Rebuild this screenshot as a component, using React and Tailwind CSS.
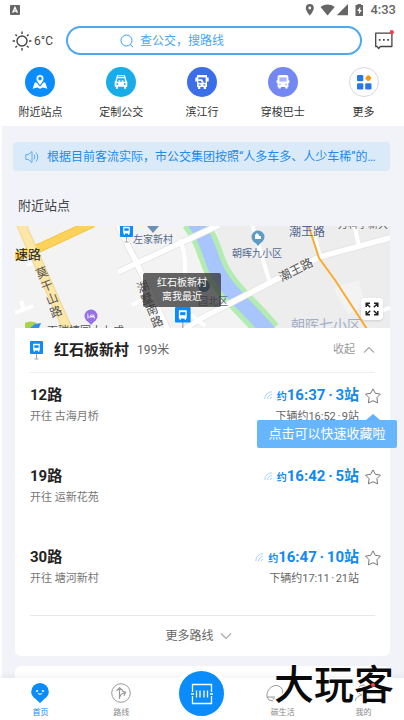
import React from "react";

const FONT = "font-['Roboto','Noto_Sans_CJK_SC',sans-serif]";

function BusGlyph({ body = "#fff", glass = "#18ace9", className = "size-4" }) {
  return (
    <svg viewBox="0 0 16 16" className={className} aria-hidden="true">
      <path d="M4.6 1h6.8a2 2 0 0 1 2 2v3.3h1v2.6h-1v4H2.6v-4h-1V6.3h1V3a2 2 0 0 1 2-2Z" fill={body} />
      <path d="M4.3 3.4h7.4v4.2H4.3z" fill={glass} />
      <circle cx="4.9" cy="10.3" r=".9" fill={glass} />
      <circle cx="11.1" cy="10.3" r=".9" fill={glass} />
      <path d="M3.4 12.5h2.4v2H3.4zM10.2 12.5h2.4v2h-2.4z" fill={body} />
    </svg>
  );
}

function StatusBar() {
  return (
    <div className="flex h-5 items-center justify-between pl-2.5 pr-2 text-[#666]">
      <svg viewBox="0 0 10 10" className="size-2.5">
        <rect width="10" height="10" rx="1" fill="#666" />
        <path d="M2.6 7.8 5 2.4l2.4 5.4M3.6 6.1h2.8" fill="none" stroke="#fff" strokeWidth="1.3" />
      </svg>
      <div className="flex items-center">
        <svg viewBox="0 0 60 14" className="mr-1.5 h-3.5 w-[60px]" fill="#666">
          <path fillRule="evenodd" d="M5.800 1a4 4 0 0 0-4 4c0 2.900 4 7.600 4 7.600s4-4.700 4-7.600a4 4 0 0 0-4-4Zm0 2.600a1.400 1.400 0 1 1 0 2.800 1.400 1.400 0 0 1 0-2.800Z" />
          <path d="M16.500 3.900c4.200-3.300 10-3.300 14.200 0l-7.100 8.600Z" />
          <path d="M44 1v11.300H32.800Z" />
          <path fillRule="evenodd" d="M51.500 2h2V.9H57V2h2v11h-7.500ZM56.200 3.800 53.200 8h1.700v3.200L57.800 7h-1.600Z" />
        </svg>
        <span className="text-[13px] font-medium leading-5">4:33</span>
      </div>
    </div>
  );
}

function Header() {
  return (
    <header className="flex items-center pl-3 pr-2.5 pt-1.5">
      <svg viewBox="0 0 20 20" className="size-5 shrink-0" fill="none" stroke="#444" strokeWidth="1.4">
        <circle cx="10" cy="10" r="5" />
        <path d="M10 .6v2.400M10 17v2.400M.6 10H3M17 10h2.400M3.400 3.400l1.600 1.600M15 15l1.600 1.600M3.400 16.600 5 15M15 5l1.600-1.600" />
      </svg>
      <span className="ml-0.5 w-8 shrink-0 whitespace-nowrap text-xs leading-5 text-[#444]">6°C</span>
      <label className="flex h-[29px] min-w-0 flex-1 items-center gap-1.5 rounded-full border-2 border-[#4fa8ee] pl-[52px] pr-4">
        <svg viewBox="0 0 14 14" className="size-3.5 shrink-0" fill="none" stroke="#399df0" strokeWidth="1">
          <circle cx="6.500" cy="6.500" r="5.500" />
          <path d="m10.400 10.600 2.800 2.700" />
        </svg>
        <input
          type="text"
          aria-label="搜索"
          placeholder="查公交，搜路线"
          className="w-full min-w-0 bg-transparent text-xs leading-5 outline-none placeholder:text-[#4ba6f1]"
        />
      </label>
      <button type="button" aria-label="消息" className="ml-3 shrink-0">
        <svg viewBox="0 0 20 22" className="h-[22px] w-5">
          <path d="M1.700 3.200h16.200v13.300H6.300L4.600 18.600 3.200 16.500H1.700Z" fill="none" stroke="#444" strokeWidth="1.300" strokeLinejoin="round" />
          <path d="M4.800 9h1.700v1.700H4.800zM9 9h1.700v1.700H9zM13.200 9h1.700v1.700h-1.700z" fill="#444" />
          <circle cx="17.800" cy="2.200" r="2.100" fill="#f5414f" />
        </svg>
      </button>
    </header>
  );
}

const shortcuts = [
  {
    label: "附近站点",
    tone: "bg-[#0a8cfb]",
    icon: (
      <svg viewBox="0 0 16 16" className="size-4">
        <path d="M2.800 8.600.6 14.800l4.500-1.300L8 14.800l2.900-1.300 4.500 1.300-2.200-6.200-1.700-.2L8 12.800 4.500 8.400Z" fill="#fff" />
        <path fillRule="evenodd" d="M8 .7a3.800 3.800 0 0 0-3.800 3.800C4.200 7.300 8 11.300 8 11.300s3.800-4 3.800-6.800A3.800 3.800 0 0 0 8 .7Zm0 2.200a1.600 1.600 0 1 1 0 3.200 1.600 1.600 0 0 1 0-3.200Z" fill="#fff" stroke="#0a8cfb" strokeWidth=".5" />
      </svg>
    ),
  },
  {
    label: "定制公交",
    tone: "bg-[#18ace9]",
    icon: (
      <svg viewBox="0 0 16 16" className="size-4">
        <path d="M4 1.200h8l1.500 5.600.8.800v5.200h-1.200v2h-2v-2H4.900v2h-2v-2H1.700V7.600l.8-.8Z" fill="#fff" />
        <path d="M5 2.500h6" stroke="#18ace9" strokeWidth=".8" />
        <path d="M4.500 4.200h7l.7 3.600H3.800Z" fill="#18ace9" />
        <path d="M5.500 7.800V6.300h1.800v1.500M8.700 7.800V6.300h1.800v1.500" fill="#fff" />
        <circle cx="4.300" cy="10" r=".9" fill="#18ace9" />
        <circle cx="11.700" cy="10" r=".9" fill="#18ace9" />
      </svg>
    ),
  },
  {
    label: "滨江行",
    tone: "bg-[#3a6fe8]",
    icon: (
      <svg viewBox="0 0 16 16" className="size-4">
        <path d="M3 1h10v2.500h1.700v4H13V13h-1v2H9.700v-2H6.300v2H4v-2H3V7.500H1.300v-4H3Z" fill="#fff" />
        <path d="M4.400 3.400h7.200v5.400H4.400Z" fill="#3a6fe8" />
        <path d="M4.400 5.200h3.800L10 8.800H7.800L7 7H4.400Z" fill="#fff" />
        <path d="M4.800 10.800h1.800M9.400 10.800h1.800" stroke="#3a6fe8" strokeWidth="1.300" />
      </svg>
    ),
  },
  {
    label: "穿梭巴士",
    tone: "bg-[#7488f5]",
    icon: <BusGlyph glass="#a9b6fb" />,
  },
  {
    label: "更多",
    tone: "border border-[#d9d5e0] bg-white",
    icon: (
      <svg viewBox="0 0 16 16" className="size-4">
        <rect x="1" y="1" width="6.300" height="6.300" rx="1.300" fill="#2876e8" />
        <rect x="1" y="9.200" width="6.300" height="6.300" rx="1.300" fill="#2876e8" />
        <rect x="9.200" y="9.200" width="6.300" height="6.300" rx="1.300" fill="#2876e8" />
        <rect x="9.800" y="1.600" width="5" height="5" rx="1.300" fill="#f79a12" transform="rotate(45 12.300 4.100)" />
      </svg>
    ),
  },
];

function Shortcuts() {
  return (
    <nav className="grid grid-cols-5 pb-1 pt-3">
      {shortcuts.map((s) => (
        <button key={s.label} type="button" className="flex flex-col items-center gap-1.5 text-[11px] leading-[19px] text-[#333]">
          <span className={`flex size-[30px] items-center justify-center rounded-full ${s.tone}`}>{s.icon}</span>
          {s.label}
        </button>
      ))}
    </nav>
  );
}

function StopMark({ x, y, s = 1 }) {
  return (
    <g transform={`translate(${x} ${y}) scale(${s})`}>
      <path d="M6.500 12v6M4.500 18h4" stroke="#a5a5a5" strokeWidth="1" />
      <rect width="13" height="13" rx="1" fill="#0a8cfb" />
      <path d="M3.200 2.800h6.600v6.700H9.200v1.200H8V9.500H5v1.200H3.800V9.500h-.6Z" fill="#fff" />
      <path d="M4.300 4.300h4.400v2.500H4.300z" fill="#0a8cfb" />
    </g>
  );
}

const ganshan = [
  ["莫", 27, 47],
  ["干", 32, 60],
  ["山", 37, 73],
  ["路", 41, 86],
];
const hushu = [
  ["湖", 128, 61],
  ["墅", 132, 73],
  ["南", 137, 84],
  ["路", 142, 96],
];

function MapView() {
  return (
    <div className="relative h-[102px] overflow-hidden">
      <svg viewBox="0 0 375 102" preserveAspectRatio="xMidYMid slice" className="size-full" fill="none">
        <rect width="375" height="102" fill="#f3f3f3" />
        <path d="M200 0H375V102H252Q225 70 212 45Z" fill="#ededed" />
        <path d="M318 62 344 54 350 80 333 88Z" fill="#f3f3f3" />
        <path d="M178-6C190 10 193 22 199 38 208 62 232 80 254 106" stroke="#b2ecb0" strokeWidth="25" />
        <path d="M178-6C190 10 193 22 199 38 208 62 232 80 254 106" stroke="#a9c5fd" strokeWidth="15" />
        <g stroke="#e2e2e2" strokeWidth="7">
          <path d="M102-3 122 38 153 104M168 104 187 92 304 31 378 11M103 46 187 7 204-1" />
        </g>
        <g stroke="#fff" strokeWidth="5.500">
          <path d="M102-3 122 38 153 104M168 104 187 92 304 31 378 11M103 46 187 7 204-1" />
        </g>
        <g stroke="#fff" strokeWidth="4">
          <path d="M164 14q7 10 6 34M237-2 255 57M339-2 344 20M299 8 305 31M355 88 375 82M0 87 18 80M6 75 9 84M12 39 22 35M117 79 130 72M176 89 190 100" />
        </g>
        <path d="M0 31 24 22 78-3" stroke="#f6c341" strokeWidth="9" />
        <path d="M0 31 24 22 78-3" stroke="#fdd25a" strokeWidth="7" />
        <path d="M6-2 53 104" stroke="#f2d688" strokeWidth="10" />
        <path d="M6-2 53 104" stroke="#fce7a8" strokeWidth="8" />
        <path d="M293-2 304 32 320 54 352 103" stroke="#f8ad31" strokeWidth="2" />

        <g fontFamily="'Roboto','Noto Sans CJK SC',sans-serif">
          <text x="0" y="33" fontSize="13" fill="#222">速路</text>
          <g fontSize="12" fill="#555" textAnchor="middle">
            {ganshan.map(([c, x, y]) => (
              <text key={c} transform={`translate(${x} ${y}) rotate(-22)`} y="4">{c}</text>
            ))}
            {hushu.map(([c, x, y]) => (
              <text key={c} transform={`translate(${x} ${y}) rotate(-22)`} y="4">{c}</text>
            ))}
            <text transform="translate(281 44) rotate(-27)" y="4">潮王路</text>
          </g>
          <text x="118" y="17" fontSize="10" fill="#53688f">左家新村</text>
          <text x="217" y="31" fontSize="10" fill="#53688f">朝晖九小区</text>
          <text x="274" y="10" fontSize="12" fill="#53688f">潮王路</text>
          <text x="323" y="2" fontSize="10" fill="#666">万科宁新大</text>
          <text x="183" y="79" fontSize="10" fill="#53688f">园北区</text>
          <text x="276" y="104" fontSize="14" fill="#a3afc9">朝晖七小区</text>
          <text x="32" y="109" fontSize="11" fill="#555">百瑞捷园大九成</text>
        </g>

        <path d="M132 0h12l-6 7Z" fill="#6d8fb5" />
        <g fill="#5d9bc4">
          <circle cx="243" cy="11" r="6.500" />
          <path d="m239 15 4 5 4-5Z" />
        </g>
        <path d="M240 13V9l2-2 2 2v4M244 13v-3h2v3Z" fill="#fff" />
        <circle cx="189" cy="60" r="6" fill="#41799c" />
        <g fill="#9671e6">
          <circle cx="76" cy="90" r="6.500" />
          <path d="m71.500 94 4.500 5 4.500-5Z" />
        </g>
        <path d="M72.800 87.500V92.500M73 91h6.500v1.500M75.500 89h3.500v1.500h-3.500Z" stroke="#fff" strokeWidth=".8" />
        <path d="M10 102V97q5-3 12 0l-6 5Z" fill="#a7d24a" />
        <path d="m15 102 5-4 6-1-2 5Z" fill="#2d8ff0" />
        <StopMark x={105} y={-2} />
        <StopMark x={160} y={81} s={1.2} />
      </svg>
      <div className="absolute left-32 top-[47px] flex h-[34px] w-[78px] flex-col items-center justify-center rounded-xs bg-[#333]/75 text-[10px] leading-[14px] text-white">
        <span>红石板新村</span>
        <span>离我最近</span>
      </div>
      <button type="button" aria-label="展开地图" className="absolute bottom-2 right-[7px] flex size-[22px] items-center justify-center rounded-sm bg-white shadow">
        <svg viewBox="0 0 14 14" className="size-3.5" fill="none" stroke="#222" strokeWidth="1.500">
          <path d="M1.200 5V1.200H5M1.200 1.200l4 4M9 1.200h3.800V5M12.800 1.200l-4 4M1.200 9v3.800H5M1.200 12.800l4-4M9 12.800h3.800V9M12.800 12.800l-4-4" />
        </svg>
      </button>
    </div>
  );
}

function SignalIcon() {
  return (
    <svg viewBox="0 0 9 9" className="mr-1 size-[9px]" fill="none" stroke="#a6d3f8" strokeWidth="1">
      <path d="M.8 8A7 7 0 0 1 8 .8M3.500 8A4.500 4.500 0 0 1 8 3.500M6.200 8A1.900 1.900 0 0 1 8 6.200" />
    </svg>
  );
}

function Chevron({ d }) {
  return (
    <svg viewBox="0 0 12 8" className="h-2 w-3" fill="none" stroke="#aaa" strokeWidth="1.200">
      <path d={d} />
    </svg>
  );
}

const routes = [
  { name: "12路", to: "古海月桥", time: "16:37", stops: "3站", next: "下辆约16:52", nextStops: "9站", tip: true },
  { name: "19路", to: "运新花苑", time: "16:42", stops: "5站" },
  { name: "30路", to: "塘河新村", time: "16:47", stops: "10站", next: "下辆约17:11", nextStops: "21站" },
];

function RouteRow({ r }) {
  return (
    <li className="relative flex h-[81px] justify-between pt-[11px]">
      <div>
        <h3 className="text-[15px] font-bold leading-[22px] text-[#222]">{r.name}</h3>
        <p className="text-[11px] leading-[22px] text-[#777]">开往 {r.to}</p>
      </div>
      <div className="flex">
        <div className="text-right">
          <p className="flex h-[22px] items-center justify-end text-[#1089f0]">
            <SignalIcon />
            <span className="flex items-baseline font-bold">
              <span className="text-[10px] leading-4">约</span>
              <span className="text-[15px] leading-[22px]">{r.time}</span>
              <span className="w-2.5 text-center text-[15px] leading-[22px]">·</span>
              <span className="text-[15px] leading-[22px]">{r.stops}</span>
            </span>
          </p>
          {r.next && (
            <p className="flex justify-end text-[11px] leading-[22px] text-[#666]">
              <span>{r.next}</span>
              <span className="w-1.5 text-center">·</span>
              <span>{r.nextStops}</span>
            </p>
          )}
        </div>
        <button type="button" aria-label="收藏" className="-mr-1.5 ml-1.5 flex h-6 items-center">
          <svg viewBox="0 0 16 16" className="size-4" fill="none" stroke="#777" strokeWidth="1" strokeLinejoin="round">
            <path d="M8 .9 10.300 5.300 15.400 6.100 11.900 9.700 12.600 14.900 8 12.700 3.400 14.900 4.100 9.700.6 6.100 5.700 5.300Z" />
          </svg>
        </button>
      </div>
      {r.tip && (
        <div role="tooltip" className="absolute -right-[22px] top-[41px] z-10 w-[140px]">
          <svg viewBox="0 0 14 6" className="ml-[109px] h-1.5 w-3.5" fill="#5fb2fb">
            <path d="M0 6 7 0l7 6Z" />
          </svg>
          <p className="rounded-xs bg-[#5fb2fb]/95 text-center text-[13px] leading-7 text-white">点击可以快速收藏啦</p>
        </div>
      )}
    </li>
  );
}

function StationCard() {
  return (
    <section className="rounded-b-md bg-white">
      <MapView />
      <div className="px-[15px]">
        <div className="flex h-[45px] items-center border-b border-[#eceef2]">
          <svg viewBox="0 0 13 19" className="h-[19px] w-[13px]">
            <StopMark x={0} y={0} />
          </svg>
          <h2 className="ml-[11px] text-[15px] font-bold leading-5 text-[#222]">红石板新村</h2>
          <span className="ml-2 text-xs leading-5 text-[#666]">199米</span>
          <button type="button" className="ml-auto flex items-center gap-2 text-[11px] leading-5 text-[#999]">
            收起
            <Chevron d="M1 6.500 6 1.500l5 5" />
          </button>
        </div>
        <ul>
          {routes.map((r) => (
            <RouteRow key={r.name} r={r} />
          ))}
        </ul>
        <div className="-mt-px border-t border-[#e6e8ec]">
          <button type="button" className="flex h-10 w-full items-center justify-center gap-1.5 pr-2 text-xs text-[#666]">
            更多路线
            <Chevron d="M1 1.500 6 6.500l5-5" />
          </button>
        </div>
      </div>
    </section>
  );
}

const tabClass = "flex flex-1 flex-col items-center gap-1 pt-[5px] text-[8px] leading-3";

function TabBar() {
  return (
    <nav className="relative z-10 flex h-[42px] shrink-0 bg-white shadow-[0_-2px_6px_rgba(0,0,0,0.05)]">
      <button type="button" className={`${tabClass} text-[#0a8cfb]`}>
        <svg viewBox="0 0 20 20" className="size-5">
          <path d="M10 0a8.800 8.800 0 0 1 8.800 8.800c0 4-3 6-5.300 8Q10 20 10 20T6.500 16.800c-2.300-2-5.300-4-5.300-8A8.800 8.800 0 0 1 10 0Z" fill="#0a8cfb" />
          <circle cx="7" cy="8" r="1" fill="#fff" />
          <circle cx="13" cy="8" r="1" fill="#fff" />
          <path d="M7.800 10.400q2.200 2 4.400 0" fill="none" stroke="#fff" />
        </svg>
        首页
      </button>
      <button type="button" className={`${tabClass} text-[#888]`}>
        <svg viewBox="0 0 20 20" className="size-5" fill="none" stroke="#999" strokeWidth="1">
          <circle cx="10" cy="10" r="9.300" />
          <path d="M8.500 16V4.800M5.500 7.800l3-3 3.500 3M8.500 14.500q1-4 5.500-5M11 8l3.500 1.300L13 12.800" strokeWidth="1.200" />
        </svg>
        路线
      </button>
      <div className="flex flex-1 justify-center">
        <button type="button" aria-label="乘车码" className="-mt-[11px] flex size-[53px] shrink-0 items-center justify-center rounded-full border-4 border-white bg-[#0a8cfb]">
          <svg viewBox="0 0 22 22" className="size-[22px]" fill="none" stroke="#fff" strokeWidth="1.300">
            <path d="M1.500 9V1.500h19V9M1.500 13v7.500h19V13M0 11h3M19 11h3" />
            <path d="M5.500 7.500v7M9 7.500v7M13 7.500v7M16.500 7.500v7" />
          </svg>
        </button>
      </div>
      <button type="button" className={`${tabClass} text-[#888]`}>
        <svg viewBox="0 0 20 20" className="-ml-4 size-5" fill="none" stroke="#999" strokeWidth="1">
          <path d="M2 14C1 7 7 2 12 2.500c5 1 7 6 5 10-2 4-8 5-10 2M2 14h8M2 14q1 4 6 4" />
        </svg>
        碳生活
      </button>
      <button type="button" className={`${tabClass} text-[#888]`}>
        <svg viewBox="0 0 20 20" className="size-5" fill="none" stroke="#999" strokeWidth="1">
          <circle cx="9" cy="7" r="5" />
          <path d="M1 18q2-6 8-6t8 6" />
        </svg>
        我的
      </button>
      <span className="pointer-events-none absolute -top-3 right-2.5 whitespace-nowrap text-[40px] font-medium leading-10 text-[#0a0a0a] [paint-order:stroke] [-webkit-text-stroke:2px_white]">
        大玩客
      </span>
      <span className="pointer-events-none absolute right-[29px] top-[5px] size-1 rounded-full bg-[#f5414f]" />
    </nav>
  );
}

export default function App() {
  return (
    <div lang="zh-CN" className={`flex h-screen flex-col overflow-hidden bg-white ${FONT}`}>
      <StatusBar />
      <Header />
      <Shortcuts />
      <main className="ml-0.5 min-h-0 flex-1 overflow-hidden bg-[#f1f3f8] pl-[13px] pr-3.5 pt-4">
        <div className="-ml-0.5 flex h-[29px] items-center gap-2 rounded bg-[#dbeaf9] pl-3 pr-2 text-[#1c8bea]">
          <svg viewBox="0 0 14 14" className="size-3.5 shrink-0" fill="none" stroke="#5aacee" strokeWidth="1">
            <path d="M.8 4.600h2.400L7 1.500v11L3.200 9.400H.8ZM9 4.500q1.800 2.500 0 5M11 2.500q3.600 4.500 0 9" />
          </svg>
          <p className="truncate text-xs leading-5">根据目前客流实际，市公交集团按照“人多车多、人少车稀”的…</p>
        </div>
        <h2 className="ml-[3px] pb-[10px] pt-[25px] text-[13px] leading-5 text-[#444]">附近站点</h2>
        <StationCard />
        <section className="mt-2.5 h-20 rounded-md bg-white" />
      </main>
      <TabBar />
    </div>
  );
}
